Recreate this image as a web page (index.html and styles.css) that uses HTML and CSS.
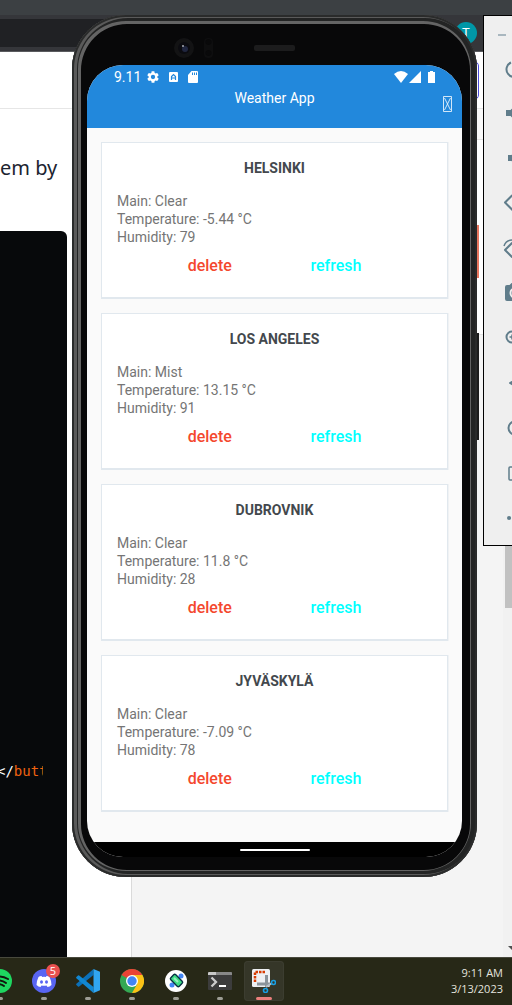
FILE: index.html
```html
<!DOCTYPE html>
<html lang="en">
<head>
<meta charset="utf-8">
<title>Weather App</title>
<link rel="stylesheet" href="styles.css">
</head>
<body>
<div class="desktop">
  <section class="browser">
    <div class="tabstrip"></div>
    <div class="toolbar"><div class="omnibox"></div><span class="avatar">T</span></div>
    <div class="page">
      <div class="site-header"><button class="outline-btn" aria-label="Account"></button></div>
      <div class="site-body">
        <main class="article">
          <p class="lead">em by</p>
          <pre class="code"><code>&lt;/<b>butt</b></code></pre>
        </main>
        <aside class="side"><div class="side-top"></div><div class="side-card"></div></aside>
        <div class="scrollbar"><span class="thumb"></span>
          <svg class="arrow" width="8" height="4" viewBox="0 0 8 4"><path d="M0 0h8L4 4z" fill="#505050"/></svg>
        </div>
      </div>
    </div>
  </section>

  <section class="phone">
    <span class="key key-power"></span><span class="key key-volume"></span>
    <div class="sensors">
      <svg width="132" height="24" viewBox="0 0 132 24">
        <circle cx="12" cy="12" r="10" fill="#131314"/><circle cx="12" cy="12" r="6" fill="#0b0b10"/>
        <circle cx="13" cy="13" r="3" fill="#20263f"/><circle cx="11" cy="10" r="1" fill="#a9adb5"/>
        <rect x="32" y="2" width="9" height="20" rx="4" fill="#0e0e0f"/><circle cx="36.500" cy="6" r="3" fill="#09090a"/><circle cx="36.500" cy="17" r="3" fill="#09090a"/>
        <rect x="82" y="9" width="41" height="6" rx="2" fill="#1c1c1d"/>
      </svg>
    </div>
    <div class="screen">
      <header class="app-header">
        <div class="status">
          <span class="time">9.11</span>
          <svg width="12" height="12" viewBox="2 2 20 20"><path fill="#fff" d="M19.140 12.940c.040-.3.060-.61.060-.94s-.020-.64-.070-.94l2.030-1.580a.5.5 0 0 0 .120-.61l-1.920-3.320a.5.5 0 0 0-.59-.22l-2.390.96a7 7 0 0 0-1.620-.94l-.36-2.540a.5.5 0 0 0-.48-.41h-3.840a.5.5 0 0 0-.47.41l-.36 2.540a7 7 0 0 0-1.620.94l-2.390-.96a.5.5 0 0 0-.59.22L2.740 8.870a.5.5 0 0 0 .12.61l2.030 1.580a7 7 0 0 0 0 1.880l-2.030 1.580a.5.5 0 0 0-.12.610l1.920 3.320c.12.22.37.290.59.220l2.390-.96c.5.380 1.030.7 1.620.94l.36 2.540c.05.240.24.410.48.410h3.840c.24 0 .44-.17.470-.41l.36-2.540a7 7 0 0 0 1.620-.94l2.390.96c.22.080.47 0 .59-.22l1.920-3.320a.5.5 0 0 0-.12-.61zM12 15.600a3.600 3.600 0 1 1 0-7.200 3.600 3.600 0 0 1 0 7.200z"/></svg>
          <svg width="9" height="10" viewBox="0 0 9 10"><rect width="9" height="10" rx="1" fill="#fff"/><path d="M2.500 8V4.500l2-2 2 2V8M3 6h3" fill="none" stroke="#2288dc" stroke-width="1.200"/></svg>
          <svg width="10" height="12" viewBox="0 0 10 12"><path d="M3.500 0H9a1 1 0 0 1 1 1v10a1 1 0 0 1-1 1H1a1 1 0 0 1-1-1V4z" fill="#fff"/><path d="M4.500 1.500v2.500M6.500 1.500v2.500M8.500 1.500v2.500" stroke="#2288dc"/></svg>
          <span class="radios">
            <svg width="14" height="12" viewBox="0 0 14 12"><path d="M0 3Q7-3 14 3L7 12z" fill="#fff"/></svg>
            <svg width="12" height="12" viewBox="0 0 12 12"><path d="M12 0v12H0z" fill="#fff"/></svg>
            <svg class="battery" width="7" height="12" viewBox="0 0 7 12"><path d="M2 0h3v1h2v11H0V1h2z" fill="#fff"/></svg>
          </span>
        </div>
        <div class="title-bar">
          <span></span><h1>Weather App</h1>
          <button class="add" aria-label="Add city"><svg width="9" height="16" viewBox="0 0 9 16"><path d="M.5.5h8v15h-8zM1.500 2l6 12M7.500 2l-6 12" fill="none" stroke="#fff" stroke-width=".8"/></svg></button>
        </div>
      </header>
      <div class="cards">
        <article class="card"><h2>HELSINKI</h2><p>Main: Clear</p><p>Temperature: -5.44 °C</p><p>Humidity: 79</p><div class="actions"><button class="delete">delete</button><button class="refresh">refresh</button></div></article>
        <article class="card"><h2>LOS ANGELES</h2><p>Main: Mist</p><p>Temperature: 13.15 °C</p><p>Humidity: 91</p><div class="actions"><button class="delete">delete</button><button class="refresh">refresh</button></div></article>
        <article class="card"><h2>DUBROVNIK</h2><p>Main: Clear</p><p>Temperature: 11.8 °C</p><p>Humidity: 28</p><div class="actions"><button class="delete">delete</button><button class="refresh">refresh</button></div></article>
        <article class="card"><h2>JYVÄSKYLÄ</h2><p>Main: Clear</p><p>Temperature: -7.09 °C</p><p>Humidity: 78</p><div class="actions"><button class="delete">delete</button><button class="refresh">refresh</button></div></article>
      </div>
      <div class="nav"><span></span></div>
    </div>
  </section>

  <section class="controls">
    <button class="minimize" aria-label="Minimize"><svg width="8" height="2" viewBox="0 0 8 2"><path d="M0 0h8v2H0z" fill="#a9b7bf"/></svg></button>
    <button aria-label="Power"><svg viewBox="0 0 24 24"><path d="M8 6.500a7.500 7.500 0 1 0 6 0M11 4v8"/></svg></button>
    <button aria-label="Volume up"><svg viewBox="0 0 24 24"><path d="M4 10h4l4-4v12l-4-4H4zM15 8q4 4 0 8" fill="#607d8b"/></svg></button>
    <button aria-label="Volume down"><svg viewBox="0 0 24 24"><path d="M6 10h3l4-4v12l-4-4H6z" fill="#607d8b"/></svg></button>
    <button aria-label="Rotate left"><svg viewBox="0 0 24 24"><path d="M2 11.500 9 4.500l8 8-7 7z" stroke-linejoin="round"/></svg></button>
    <button aria-label="Rotate right"><svg viewBox="0 0 24 24"><path d="M2 14l7-7 7 7-7 7z" stroke-linejoin="round"/><path d="M1 10Q3 4 10 4" stroke-width="1.500"/></svg></button>
    <button aria-label="Take screenshot"><svg viewBox="0 0 24 24"><path d="M4 5h3l2-2h6l2 2h4v14H4q-1 0-1-1V6q0-1 1-1z" fill="#607d8b"/><circle cx="12" cy="12" r="4.500" fill="#607d8b" stroke="#efefef"/></svg></button>
    <button aria-label="Zoom"><svg viewBox="0 0 24 24"><circle cx="9" cy="11" r="5.500"/><path d="M13 15l6 6M6.500 11h5M9 8.500v5" stroke-width="1.500"/></svg></button>
    <button aria-label="Back"><svg viewBox="0 0 24 24"><path d="M7 12l9-5v10z" fill="#607d8b" stroke-linejoin="round"/></svg></button>
    <button aria-label="Home"><svg viewBox="0 0 24 24"><circle cx="12" cy="12" r="6.500"/></svg></button>
    <button aria-label="Overview"><svg viewBox="0 0 24 24"><rect x="6" y="6" width="12" height="13" rx="1" stroke-width="1.500"/></svg></button>
    <button aria-label="More"><svg viewBox="0 0 24 24"><path d="M6 12h.1M12 12h.1M18 12h.1" stroke-width="4" stroke-linecap="round"/></svg></button>
  </section>

  <footer class="taskbar">
    <div class="apps">
      <button class="app" aria-label="Spotify"><svg viewBox="0 0 24 24"><circle cx="12" cy="12" r="12" fill="#1ed760"/><path d="M5 8q8-2 15 2M6 12q7-2 12 2M6 16q6-2 10 1" fill="none" stroke="#10180d" stroke-width="2" stroke-linecap="round"/></svg></button>
      <button class="app" aria-label="Discord"><svg viewBox="0 0 24 24"><circle cx="12" cy="12" r="12" fill="#5865f2"/><path d="M9.500 7Q7.500 7 6.500 8 4.500 12 4.500 16q2 2 4 2l1-1.500q2.500.6 5 0l1 1.500q2 0 4-2 0-4-2-8-1-1-3-1l-.7 1q-1.800-.3-3.600 0z" fill="#fff"/><ellipse cx="9.500" cy="13" rx="1.500" ry="1.700" fill="#5865f2"/><ellipse cx="14.500" cy="13" rx="1.500" ry="1.700" fill="#5865f2"/></svg><span class="badge">5</span></button>
      <button class="app" aria-label="Visual Studio Code"><svg viewBox="0 0 24 24"><path d="M17.500 0v6L3.200 17.500q-.6.400-1.200 0L.4 16q-.6-.6 0-1.300z" fill="#0b70b8"/><path d="M17.500 24v-6L3.200 6.500Q2.600 6.100 2 6.500L.4 8q-.6.600 0 1.300z" fill="#1187d1"/><path d="M17.500 0 24 2.800v18.400L17.500 24z" fill="#30a6f1"/></svg></button>
      <button class="app" aria-label="Chrome"><svg viewBox="0 0 24 24"><circle cx="12" cy="12" r="12" fill="#34a853"/><path d="M12 12 1.600 6A12 12 0 0 1 22.400 6H12z" fill="#ea4335"/><path d="M12 6h10.400A12 12 0 0 1 12 24l5.200-9z" fill="#fbc116"/><circle cx="12" cy="12" r="6" fill="#fff"/><circle cx="12" cy="12" r="4.700" fill="#4285f4"/></svg></button>
      <button class="app" aria-label="Android Emulator"><svg viewBox="0 0 24 24"><circle cx="12" cy="12" r="11" fill="#fff"/><circle cx="8" cy="16" r="2.500" fill="#4285f4"/><circle cx="17" cy="7" r="2.500" fill="#4285f4"/><rect x="9" y="5.500" width="7" height="12" rx="1.500" transform="rotate(-45 12.500 11.500)" fill="#3ddc84" stroke="#073042" stroke-width="1.400"/><path d="m10 9 4 4" stroke="#9aefc0" stroke-width="2"/></svg></button>
      <button class="app" aria-label="Terminal"><svg viewBox="0 0 24 24"><rect y="3" width="24" height="18" rx="1" fill="#3c3c3c"/><path d="M0 6V4q0-1 1-1h22q1 0 1 1v2z" fill="#888"/><path d="M1 3h7v3H0V4z" fill="#c8c8c8"/><path d="m3.500 8.500 4.500 4.500-4.500 4.500" fill="none" stroke="#ccc" stroke-width="2.300"/><path d="M11 17h7" stroke="#fff" stroke-width="2"/></svg></button>
      <button class="app active" aria-label="Snipping Tool"><svg viewBox="0 0 24 24"><rect x="0" y="0" width="18" height="18" rx="1.500" fill="#eef0f3"/><path d="M13 3H3v11" fill="none" stroke="#d83b01" stroke-width="2.500" stroke-dasharray="2.500 1"/><path d="M5 15h13M14.500 6v12" stroke="#8c949b" stroke-width="3" fill="none"/><path d="m14 18 6-4" stroke="#b8bec4" stroke-width="2"/><circle cx="21.500" cy="13.500" r="2" fill="none" stroke="#189fe5" stroke-width="1.600"/><circle cx="13.500" cy="21.500" r="2" fill="none" stroke="#189fe5" stroke-width="1.600"/></svg></button>
    </div>
    <div class="clock"><span>9:11 AM</span><span>3/13/2023</span></div>
  </footer>
</div>
</body>
</html>
```
FILE: styles.css
```css
* { box-sizing: border-box; }
body { margin: 0; overflow: hidden; font-family: Roboto, "Liberation Sans", sans-serif; }
h1, h2, p, pre { margin: 0; }
button { padding: 0; border: 0; background: none; font: inherit; color: inherit; }
svg { display: block; }

.desktop { position: relative; display: flex; flex-direction: column; height: 100vh; overflow: hidden; }

/* Browser in the background */
.browser { flex: 1; min-height: 0; display: flex; flex-direction: column; background: #fff; }
.tabstrip { height: 15px; background: #3c4043; }
.toolbar { display: flex; align-items: center; gap: 16px; height: 37px; padding-right: 35px; background: #35363a; border-bottom: 1px solid #5a5b5e; }
.omnibox { flex: 1; height: 28px; background: #202124; border-radius: 0 14px 14px 0; }
.avatar { width: 22px; height: 22px; border-radius: 50%; background: #0097a7; color: #fff; font-size: 13px; line-height: 22px; text-align: center; }
.page { flex: 1; min-height: 0; display: flex; flex-direction: column; }
.site-header { display: flex; justify-content: flex-end; align-items: center; height: 57px; padding-right: 33px; border-bottom: 1px solid #e6e6e6; }
.outline-btn { width: 60px; height: 39px; border: 1px solid #4b4bdc; border-radius: 5px; }
.site-body { flex: 1; min-height: 0; display: flex; }
.article { width: 132px; padding-right: 64px; display: flex; flex-direction: column; border-right: 1px solid #dadada; }
.lead { padding: 44px 0 48px; font: 20px/30px "Noto Sans", sans-serif; color: #1c2430; white-space: nowrap; }
.code { flex: 1; padding: 531px 24px 0 0; border-radius: 0 6px 0 0; background: #07090b; color: #fff; font: 14px/18px "DejaVu Sans Mono", monospace; }
.code code { display: block; overflow: hidden; text-indent: -3px; font: inherit; }
.code b { color: #f0620f; font-weight: 400; }
.side { flex: 1; background: #f4f4f4; }
.side-top { height: 31px; background: #f9f9f9; border-bottom: 1px solid #e4e4e4; }
.side-card { height: 195px; background: #fff; border-bottom: 1px solid #e4e4e4; }
.scrollbar { width: 9px; display: flex; flex-direction: column; justify-content: space-between; align-items: flex-end; padding-bottom: 7px; background: #f1f1f1; }
.thumb { width: 7px; height: 499px; background: #c1c1c1; }
.arrow { width: 8px; margin-right: -4px; }

/* Phone window */
.phone { position: absolute; top: 15px; left: 72px; right: 35px; padding: 20px 15px; border-radius: 54px; background: #080809;
  box-shadow: inset 0 0 0 2px #2a2b2b, inset 2px 0 0 3px #5a5a5a, inset 0 0 0 6px #232424, inset 1px 1px 0 8px #646464; }
.key { position: absolute; right: -2px; width: 2px; }
.key-power { top: 210px; height: 53px; background: #e9765e; }
.key-volume { top: 318px; height: 107px; background: #1c1c1c; }
.sensors { height: 30px; padding: 1px 0 0 85px; }
.screen { overflow: hidden; border-radius: 36px; background: #fafafa; }
.app-header { height: 63px; background: #2288dc; color: #fff; }
.status { display: flex; align-items: center; gap: 10px; height: 24px; padding: 0 27px; }
.time { font-size: 14px; line-height: 24px; margin-right: -4px; }
.radios { display: flex; gap: 1px; margin-left: auto; }
.battery { margin-left: 6px; }
.title-bar { display: grid; grid-template-columns: 1fr auto 1fr; height: 30px; padding: 0 10px; }
.title-bar h1 { font-size: 14px; font-weight: 400; line-height: 18px; }
.add { justify-self: end; align-self: start; padding-top: 7px; }
.cards { display: flex; flex-direction: column; gap: 14px; padding: 14px 14px 30px; }
.card { height: 157px; padding: 15px; border: 1px solid #e1e8ee; border-bottom-width: 2px; background: #fff; box-shadow: 1px 0 0 #f0f2f4; }
.card h2 { margin-bottom: 14px; color: #43484d; font-size: 14px; font-weight: 700; line-height: 20px; text-align: center; }
.card p { color: #757575; font-size: 14px; line-height: 18px; }
.actions { display: flex; justify-content: space-evenly; margin-top: 10px; }
.actions button { padding: 0 8px; font-size: 16px; font-weight: 500; line-height: 20px; }
.delete { color: #f4482e; }
.refresh { color: #00ffff; }
.nav { display: flex; justify-content: center; align-items: center; height: 15px; background: #000; }
.nav span { width: 70px; height: 2px; border-radius: 1px; background: #fff; }

/* Emulator side controls */
.controls { position: absolute; top: 15px; right: -24px; width: 53px; display: flex; flex-direction: column; padding: 8px 0 5px 14px; border: 1px solid #000; background: #efefef; }
.controls button { display: flex; align-items: center; width: 24px; height: 45px; margin-left: 5px; }
.controls svg { flex: none; width: 24px; fill: none; stroke: #607d8b; stroke-width: 2; }
.controls .minimize { height: 21px; margin-left: 0; }
.controls .minimize svg { width: 8px; stroke: none; }

/* Taskbar */
.taskbar { display: flex; align-items: center; justify-content: space-between; height: 48px; padding: 0 9px 1px 0; border-top: 1px solid #48493d; background: #272817; }
.apps { display: flex; gap: 4px; margin-left: -20px; }
.app { position: relative; display: flex; flex-direction: column; align-items: center; gap: 4px; width: 40px; height: 40px; padding-top: 8px; border-radius: 4px; }
.app svg { width: 24px; height: 24px; }
.app::after { content: ""; width: 6px; height: 3px; border-radius: 2px; background: #9d9d94; }
.app.active { background: #353628; box-shadow: inset 0 0 0 1px #3c3d30; }
.app.active::after { width: 16px; background: #ec7f7c; }
.badge { position: absolute; top: 3px; right: 4px; width: 14px; height: 14px; border-radius: 50%; background: #e9504f; color: #fff; font: 11px/14px "Open Sans", sans-serif; text-align: center; }
.clock { display: flex; flex-direction: column; align-items: flex-end; color: #e4e4df; font: 11px/16px "Open Sans", sans-serif; }
```
